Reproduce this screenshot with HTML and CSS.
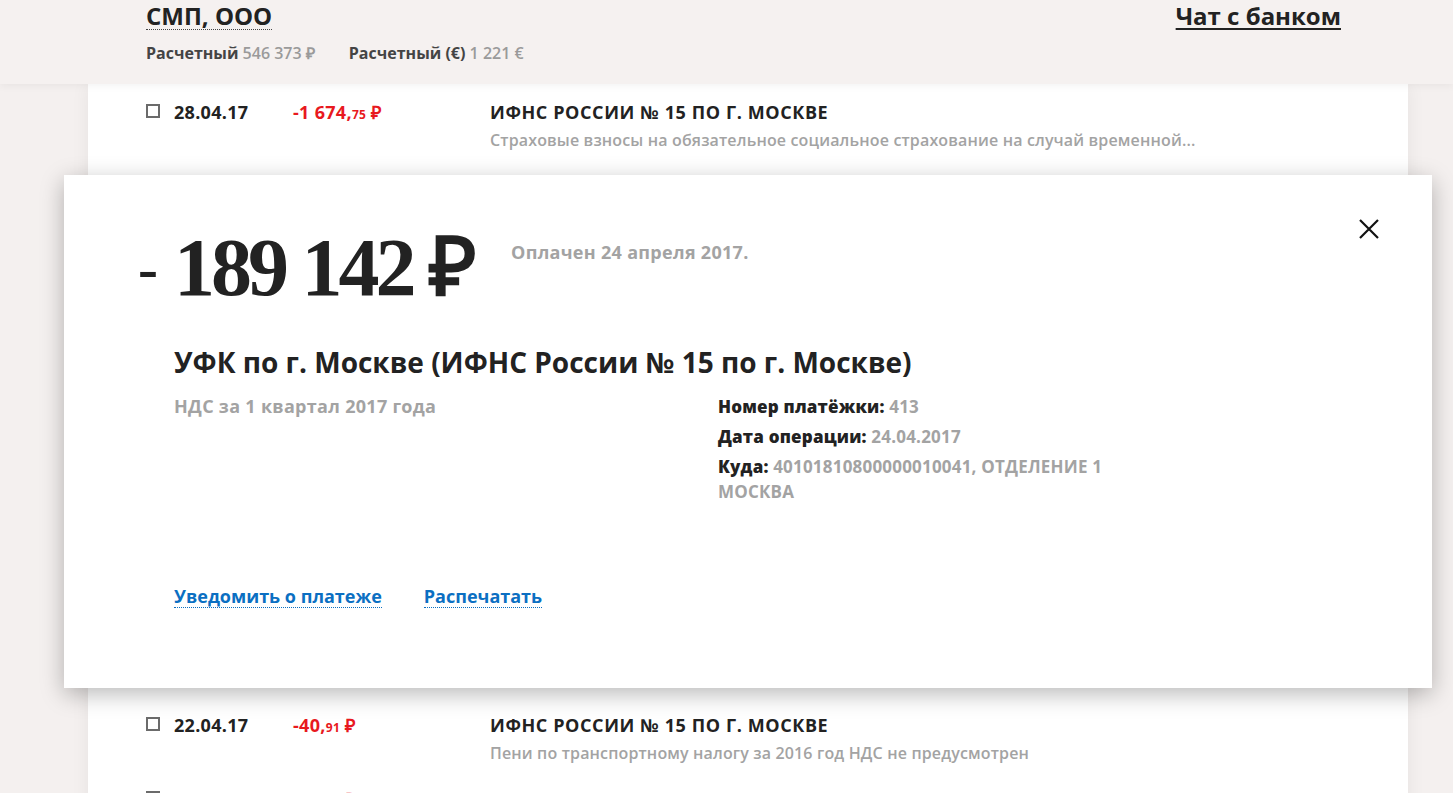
FILE: index.html
```html
<!DOCTYPE html>
<html lang="ru">
<head>
  <meta charset="UTF-8">
  <meta name="viewport" content="width=device-width, initial-scale=1.0">
  <title>Выписка — СМП, ООО</title>
  <link rel="stylesheet" href="styles.css">
</head>
<body>

  <!-- Шапка со счетами -->
  <header class="top-bar">
    <div class="top-bar-main">
      <a class="company-name" href="#">СМП, ООО</a>
      <a class="chat-link" href="#">Чат с банком</a>
    </div>
    <div class="accounts">
      <span class="account"><b>Расчетный</b> 546 373 ₽</span>
      <span class="account"><b>Расчетный (€)</b> 1 221 €</span>
    </div>
  </header>

  <main class="operations">
    <div class="operation">
      <span class="check"></span>
      <span class="op-date">28.04.17</span>
      <span class="op-sum">-1 674,<small>75</small> ₽</span>
      <div class="op-info">
        <div class="op-name">ИФНС России № 15 по г. Москве</div>
        <div class="op-desc">Страховые взносы на обязательное социальное страхование на случай временной...</div>
      </div>
    </div>

    <!-- Раскрытая операция -->
    <section class="payment-card">
      <button class="close-btn" aria-label="Закрыть">
        <svg width="20" height="20" viewBox="0 0 20 20"><path d="M1 1L19 19M19 1L1 19" stroke="#111" stroke-width="2.2" fill="none"/></svg>
      </button>
      <div class="payment-head">
        <div class="payment-amount"><span class="minus">-</span>189 142 ₽</div>
        <div class="payment-status">Оплачен 24 апреля 2017.</div>
      </div>
      <h2 class="payment-title">УФК по г. Москве (ИФНС России № 15 по г. Москве)</h2>
      <div class="payment-details">
        <div class="payment-purpose">НДС за 1 квартал 2017 года</div>
        <div class="payment-props">
          <p><b>Номер платёжки:</b> 413</p>
          <p><b>Дата операции:</b> 24.04.2017</p>
          <p><b>Куда:</b> 40101810800000010041, ОТДЕЛЕНИЕ 1 МОСКВА</p>
        </div>
      </div>
      <div class="payment-actions">
        <a href="#">Уведомить о платеже</a>
        <a href="#">Распечатать</a>
      </div>
    </section>

    <div class="operation">
      <span class="check"></span>
      <span class="op-date">22.04.17</span>
      <span class="op-sum">-40,<small>91</small> ₽</span>
      <div class="op-info">
        <div class="op-name">ИФНС России № 15 по г. Москве</div>
        <div class="op-desc">Пени по транспортному налогу за 2016 год НДС не предусмотрен</div>
      </div>
    </div>

    <div class="operation">
      <span class="check"></span>
      <span class="op-date">20.04.17</span>
      <span class="op-sum">-71,<small>00</small> ₽</span>
      <div class="op-info">
        <div class="op-name">ИФНС России № 15 по г. Москве</div>
        <div class="op-desc">Транспортный налог за 2016 год НДС не предусмотрен</div>
      </div>
    </div>
  </main>

</body>
</html>
```

FILE: styles.css
```css
body {
  font-family: "Open Sans", Arial, sans-serif;
  background-color: #f4f0ef;
  margin: 0;
  color: #222;
  overflow: hidden;
  height: 793px;
}
a {
  color: inherit;
  text-decoration: none;
}

.top-bar {
  background-color: #f5f1f0;
  height: 84px;
  box-sizing: border-box;
  padding: 0 112px 0 146px;
  position: relative;
  z-index: 2;
  box-shadow: 0 2px 8px rgba(0, 0, 0, 0.05);
}
.top-bar-main {
  display: flex;
  justify-content: space-between;
  height: 32px;
  align-items: center;
}
.company-name,
.chat-link {
  font-size: 24px;
  font-weight: 700;
  line-height: 30px;
  color: #222;
}
.company-name {
  border-bottom: 1px dotted #444;
  line-height: 26px;
}
.chat-link {
  text-decoration: underline;
  text-decoration-thickness: 2px;
  text-underline-offset: 3px;
}
.accounts {
  display: flex;
  gap: 34px;
  margin-top: 10px;
  font-size: 16px;
  line-height: 22px;
  color: #9a9a9a;
  font-weight: 600;
}
.accounts b {
  color: #444;
  font-weight: 700;
}

.operations {
  background-color: white;
  width: 1320px;
  margin-left: 88px;
  min-height: 760px;
  box-shadow: 0 0 18px rgba(0, 0, 0, 0.06);
  position: relative;
  z-index: 1;
}
.operation {
  display: flex;
  align-items: flex-start;
  height: 74px;
  box-sizing: border-box;
  padding: 16px 0 0 58px;
  font-size: 18px;
  line-height: 24px;
}
.check {
  width: 10px;
  height: 10px;
  border: 2px solid #6b6b6b;
  margin: 4px 14px 0 0;
  flex-shrink: 0;
}
.op-date {
  width: 119px;
  font-weight: 700;
  letter-spacing: 0.3px;
}
.op-sum {
  width: 197px;
  color: #e8191e;
  font-weight: 700;
  letter-spacing: 0.3px;
}
.op-sum small {
  font-size: 12px;
}
.op-name {
  font-weight: 700;
  text-transform: uppercase;
  letter-spacing: 0.6px;
}
.op-desc {
  color: #a3a3a3;
  font-size: 16px;
  font-weight: 600;
  margin-top: 4px;
  letter-spacing: 0.15px;
}

.payment-card {
  background-color: white;
  margin: 17px -24px 9px;
  height: 513px;
  box-sizing: border-box;
  padding: 52px 110px 0;
  position: relative;
  box-shadow: 0 6px 22px rgba(0, 0, 0, 0.28);
}
.close-btn {
  position: absolute;
  top: 44px;
  right: 53px;
  border: none;
  background: none;
  padding: 0;
  cursor: pointer;
}
.payment-head {
  display: flex;
  align-items: flex-start;
}
.payment-amount {
  font-family: "Liberation Serif", "Times New Roman", serif;
  font-weight: 700;
  font-size: 82px;
  line-height: 82px;
  letter-spacing: -4px;
  position: relative;
}
.payment-amount .minus {
  position: absolute;
  left: -36px;
  font-size: 60px;
}
.payment-status {
  color: #a3a3a3;
  font-size: 18px;
  font-weight: 700;
  margin: 13px 0 0 38px;
  letter-spacing: 0.3px;
}
.payment-title {
  font-size: 28px;
  font-weight: 700;
  margin: 33px 0 0;
  line-height: 40px;
}
.payment-details {
  display: flex;
  margin-top: 12px;
  font-size: 17px;
  font-weight: 700;
  color: #a3a3a3;
  line-height: 25px;
}
.payment-purpose {
  width: 544px;
  font-size: 18px;
  letter-spacing: 0.3px;
}
.payment-props {
  width: 440px;
  letter-spacing: 0.2px;
}
.payment-props p {
  margin: 0 0 5px;
}
.payment-props b {
  color: #222;
}
.payment-actions {
  display: flex;
  gap: 42px;
  margin-top: 76px;
  font-size: 18px;
  font-weight: 700;
}
.payment-actions a {
  color: #0b6fc2;
  border-bottom: 1px dotted #0b6fc2;
  line-height: 22px;
}
```
